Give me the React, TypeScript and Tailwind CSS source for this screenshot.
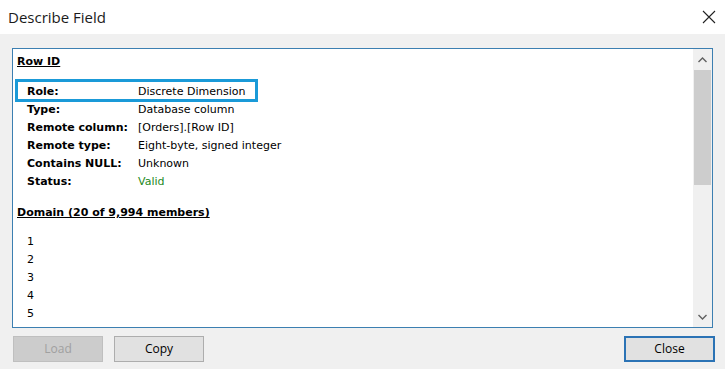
const rows: { label: string; value: string; green?: boolean }[] = [
  { label: "Role:", value: "Discrete Dimension" },
  { label: "Type:", value: "Database column" },
  { label: "Remote column:", value: "[Orders].[Row ID]" },
  { label: "Remote type:", value: "Eight-byte, signed integer" },
  { label: "Contains NULL:", value: "Unknown" },
  { label: "Status:", value: "Valid", green: true },
];

const members = ["1", "2", "3", "4", "5"];

export default function App() {
  return (
    <div className="flex h-[369px] w-[725px] flex-col overflow-hidden bg-[#f0f0f0] font-['Open_Sans',sans-serif]">
      {/* title bar */}
      <div className="flex h-[34px] shrink-0 items-center justify-between bg-white pl-[8px] pr-[8px]">
        <span className="text-[15px] text-[#1b1b1b]">Describe Field</span>
        <svg width="14" height="14" viewBox="0 0 14 14" className="mr-[1px]">
          <path d="M1 1L13 13M13 1L1 13" stroke="#222" strokeWidth="1.1" />
        </svg>
      </div>

      {/* content */}
      <div className="mx-[12px] mt-[14px] flex h-[280px] border border-[#3c7fb1] bg-white">
        <div className="flex-1 overflow-hidden pl-[4px] pt-[4px] font-['DejaVu_Sans',sans-serif] text-[11px] leading-[18px] text-black">
          <div className="font-bold underline">Row ID</div>
          <div className="relative mt-[12px]">
            {/* highlight around the Role row */}
            <div className="absolute left-[-2px] top-[-4px] h-[23px] w-[243px] border-[3px] border-[#1a9ad8]" />
            {rows.map((r) => (
              <div key={r.label} className="flex pl-[10px]">
                <span className="w-[111px] font-bold">{r.label}</span>
                <span className={r.green ? "text-[#1e8a1e]" : ""}>{r.value}</span>
              </div>
            ))}
          </div>
          <div className="mt-[13px] font-bold underline">Domain (20 of 9,994 members)</div>
          <div className="mt-[11px] pl-[10px]">
            {members.map((m) => (
              <div key={m}>{m}</div>
            ))}
          </div>
        </div>
        {/* scrollbar */}
        <div className="flex w-[19px] flex-col bg-[#f0f0f0]">
          <div className="flex h-[21px] items-center justify-center">
            <svg width="9" height="6" viewBox="0 0 9 6">
              <path d="M0.5 5L4.5 1L8.5 5" stroke="#606060" strokeWidth="1.4" fill="none" />
            </svg>
          </div>
          <div className="mx-[1px] h-[115px] bg-[#cdcdcd]" />
          <div className="flex-1" />
          <div className="flex h-[21px] items-center justify-center">
            <svg width="9" height="6" viewBox="0 0 9 6">
              <path d="M0.5 1L4.5 5L8.5 1" stroke="#606060" strokeWidth="1.4" fill="none" />
            </svg>
          </div>
        </div>
      </div>

      {/* buttons */}
      <div className="mt-[8px] flex items-center px-[13px] text-[12px]">
        <button className="h-[26px] w-[90px] border border-[#bfbfbf] bg-[#cccccc] text-[#a0a0a0]">
          Load
        </button>
        <button className="ml-[11px] h-[26px] w-[90px] border border-[#adadad] bg-[#e1e1e1] text-black">
          Copy
        </button>
        <button className="ml-auto mr-[-3px] h-[26px] w-[91px] border-2 border-[#2b73b5] bg-[#e1e1e1] text-black">
          Close
        </button>
      </div>
    </div>
  );
}
